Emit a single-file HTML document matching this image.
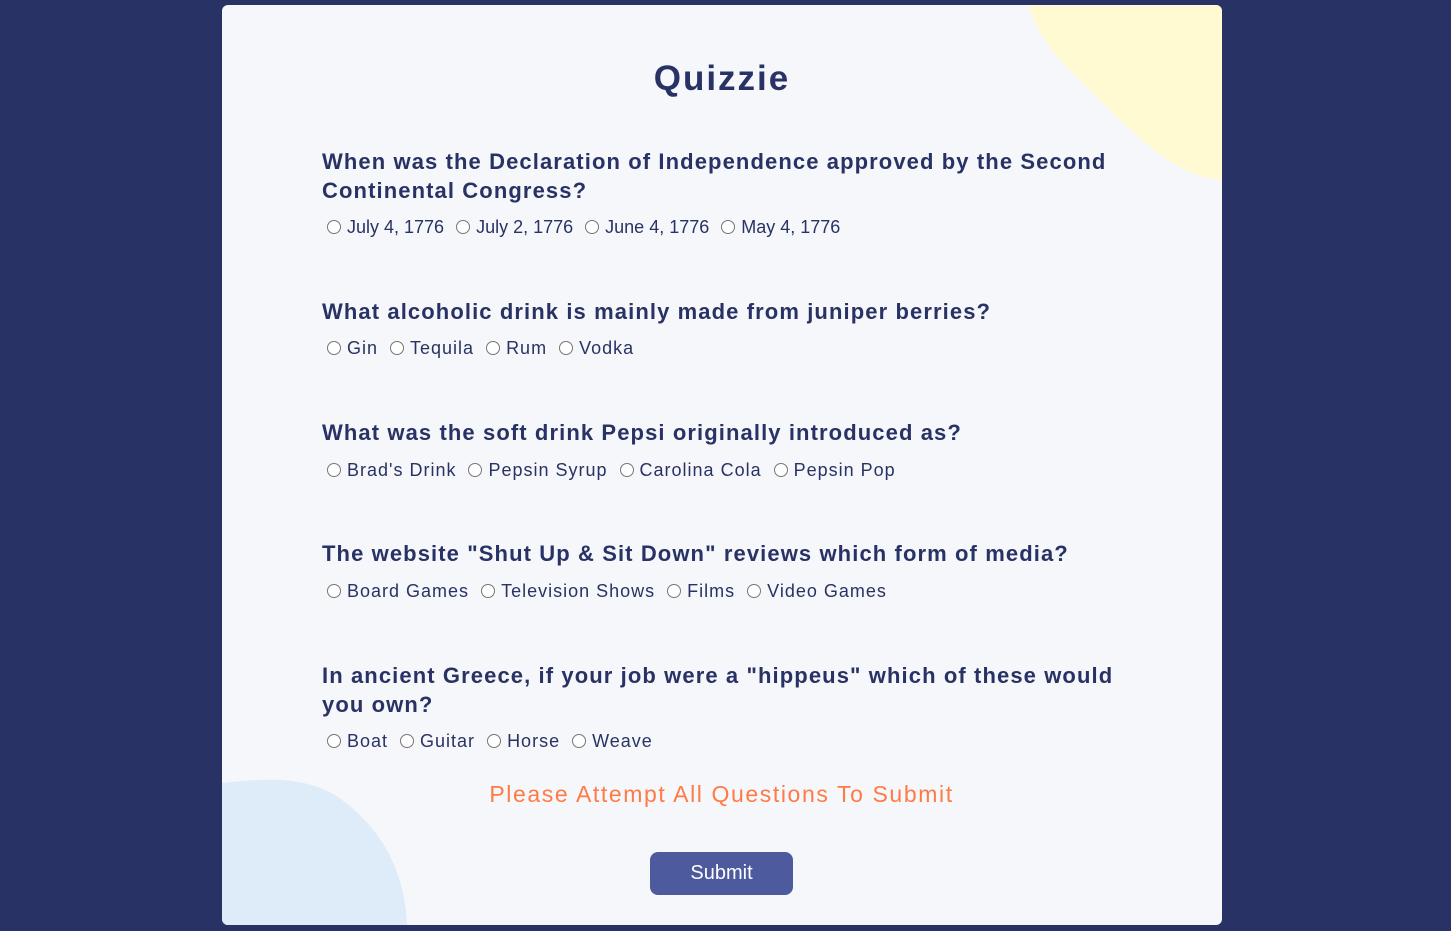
<!DOCTYPE html>
<html><head><style>
html,body{margin:0;padding:0}
body{width:1451px;height:931px;background:#293264;position:relative;overflow:hidden;font-family:"Liberation Sans",sans-serif;color:#293264}
.card{position:absolute;left:222px;top:5px;width:1000px;height:920px;background:#F5F7FB;border-radius:6px;overflow:hidden}
.t{position:absolute;white-space:nowrap}
.h{font-size:35px;letter-spacing:2px;font-weight:bold;left:0;width:1444px;text-align:center;top:58px;line-height:42px}
.q{left:322px;font-size:22px;letter-spacing:1.1px;line-height:29px;font-weight:bold;color:#293264}
.o{left:327px;font-size:18px;letter-spacing:1px;line-height:22px;color:#293264;display:flex;align-items:center}
.o span{display:inline-flex;align-items:center;margin-right:12px}
.o i{display:inline-block;border:1px solid #767676;border-radius:50%;background:#fff;margin-right:6px;box-sizing:border-box;width:14px;height:14px}
.warn{left:0;width:1443px;text-align:center;top:780px;font-size:23px;letter-spacing:1.6px;color:#FF7A45;line-height:28px}
.btn{position:absolute;left:650px;top:852px;width:143px;height:43px;background:#4D5B9E;border-radius:8px;color:#fff;font-size:20px;text-align:center;line-height:43px}
</style></head><body>
<div class="card"></div>
<svg width="1451" height="931" style="position:absolute;left:0;top:0">
<defs><clipPath id="c"><rect x="222" y="5" width="1000" height="920" rx="6"/></clipPath></defs>
<g clip-path="url(#c)">
<path d="M1028,5 C1040,40 1060,62 1100,100 C1150,150 1180,176 1222,180 L1222,5 Z" fill="#FFFAD1"/>
<path d="M222,783 C262,779 300,775 335,795 C380,825 405,870 407,925 L222,925 Z" fill="#DEEBF8"/>
</g></svg>
<div class="t h">Quizzie</div>
<div class="t q" style="top:147px">When was the Declaration of Independence approved by the Second<br>Continental Congress?</div>
<div class="t o" style="top:216px;letter-spacing:0"><span><i></i>July 4, 1776</span><span><i></i>July 2, 1776</span><span><i></i>June 4, 1776</span><span><i></i>May 4, 1776</span></div>
<div class="t q" style="top:297px">What alcoholic drink is mainly made from juniper berries?</div>
<div class="t o" style="top:337px"><span><i></i>Gin</span><span><i></i>Tequila</span><span><i></i>Rum</span><span><i></i>Vodka</span></div>
<div class="t q" style="top:418px">What was the soft drink Pepsi originally introduced as?</div>
<div class="t o" style="top:459px"><span><i></i>Brad's Drink</span><span><i></i>Pepsin Syrup</span><span><i></i>Carolina Cola</span><span><i></i>Pepsin Pop</span></div>
<div class="t q" style="top:539px">The website "Shut Up &amp; Sit Down" reviews which form of media?</div>
<div class="t o" style="top:580px"><span><i></i>Board Games</span><span><i></i>Television Shows</span><span><i></i>Films</span><span><i></i>Video Games</span></div>
<div class="t q" style="top:661px">In ancient Greece, if your job were a "hippeus" which of these would<br>you own?</div>
<div class="t o" style="top:730px"><span><i></i>Boat</span><span><i></i>Guitar</span><span><i></i>Horse</span><span><i></i>Weave</span></div>
<div class="t warn">Please Attempt All Questions To Submit</div>
<div class="btn">Submit</div>
</body></html>
